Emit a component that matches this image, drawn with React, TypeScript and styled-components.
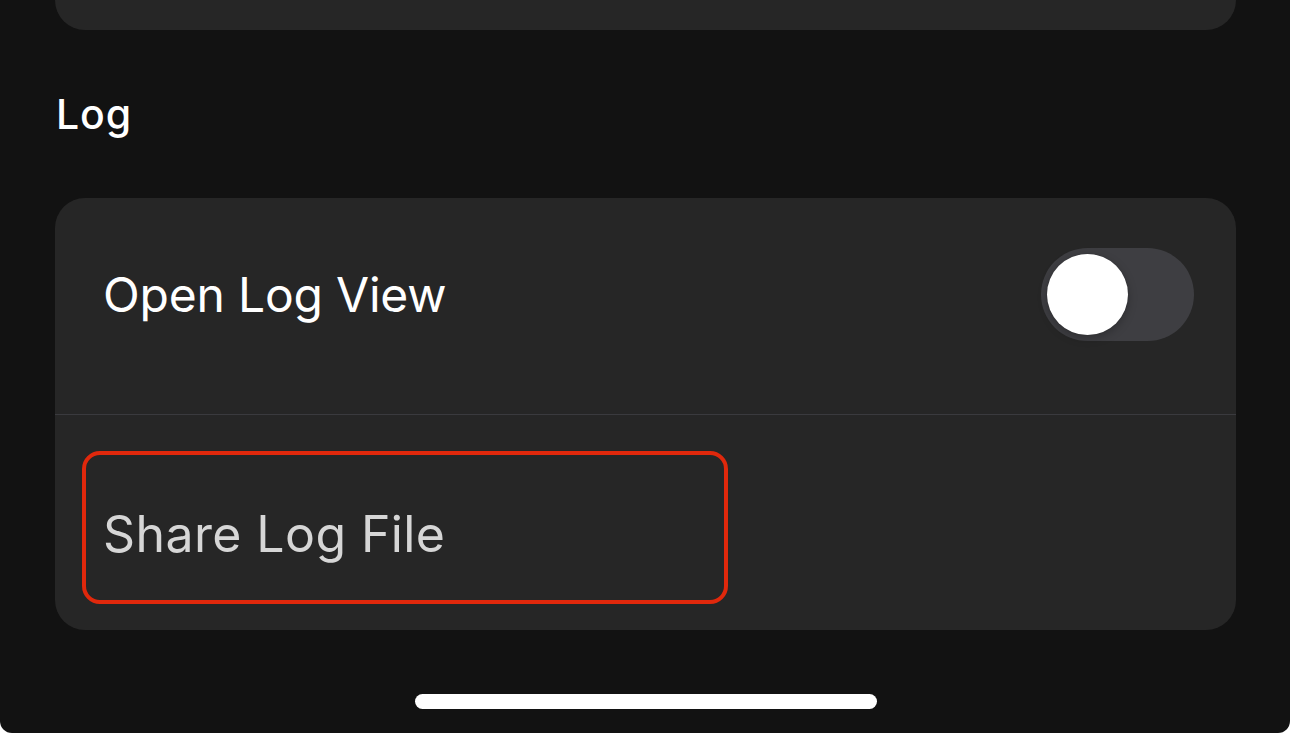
import React from "react";
import styled, { createGlobalStyle } from "styled-components";

const Global = createGlobalStyle`
  html, body { margin: 0; padding: 0; background: #ffffff; }
  body { font-family: Inter, "Noto Sans", sans-serif; }
`;

const Screen = styled.div`
  width: 1290px;
  height: 733px;
  background: #121212;
  border-radius: 0 0 12px 12px;
  overflow: hidden;
  display: flex;
  flex-direction: column;
  padding: 0 54px 0 55px;
  box-sizing: border-box;
`;

const TopCard = styled.div`
  height: 30px;
  background: #262626;
  border-radius: 0 0 30px 30px;
  flex-shrink: 0;
`;

const SectionHeader = styled.div`
  height: 168px;
  display: flex;
  align-items: center;
  padding-left: 1px;
  color: #ffffff;
  font-size: 41px;
  font-weight: 500;
  letter-spacing: 0.9px;
  flex-shrink: 0;
`;

const Card = styled.div`
  background: #262626;
  border-radius: 30px;
  display: flex;
  flex-direction: column;
  overflow: hidden;
  flex-shrink: 0;
`;

const Row = styled.div<{ $h: number }>`
  height: ${(p) => p.$h}px;
  display: flex;
  align-items: center;
  justify-content: space-between;
  padding: 0 42px 24px 48px;
  box-sizing: border-box;
`;

const Label = styled.span<{ $muted?: boolean }>`
  font-size: ${(p) => (p.$muted ? "50px" : "48px")};
  font-weight: 400;
  color: ${(p) => (p.$muted ? "#d6d6d6" : "#ffffff")};
  letter-spacing: ${(p) => (p.$muted ? "0.4px" : "-0.2px")};
`;

const Divider = styled.div`
  height: 1px;
  background: #3a3a3e;
`;

const ActionRow = styled.div`
  height: 215px;
  display: flex;
  align-items: flex-start;
  padding: 36px 0 0 27px;
  box-sizing: border-box;
`;

const Highlight = styled.div`
  width: 646px;
  height: 153px;
  box-sizing: border-box;
  border: 4px solid #e0280c;
  border-radius: 18px;
  display: flex;
  align-items: center;
  padding-left: 17px;
  padding-top: 12px;
`;

const Track = styled.div`
  width: 153px;
  height: 93px;
  border-radius: 47px;
  background: #3e3e42;
  position: relative;
  flex-shrink: 0;
`;

const Knob = styled.div`
  position: absolute;
  left: 6px;
  top: 6px;
  width: 81px;
  height: 81px;
  border-radius: 50%;
  background: #ffffff;
  box-shadow: 0 3px 10px rgba(0, 0, 0, 0.25), 0 0 0 1px rgba(0, 0, 0, 0.04);
`;

const HomeBar = styled.div`
  margin: 64px auto 0;
  width: 462px;
  height: 15px;
  border-radius: 8px;
  background: #ffffff;
`;

export default function App() {
  return (
    <>
      <Global />
      <Screen>
        <TopCard />
        <SectionHeader>Log</SectionHeader>
        <Card>
          <Row $h={216}>
            <Label>Open Log View</Label>
            <Track>
              <Knob />
            </Track>
          </Row>
          <Divider />
          <ActionRow>
            <Highlight>
              <Label $muted>Share Log File</Label>
            </Highlight>
          </ActionRow>
        </Card>
        <HomeBar />
      </Screen>
    </>
  );
}
